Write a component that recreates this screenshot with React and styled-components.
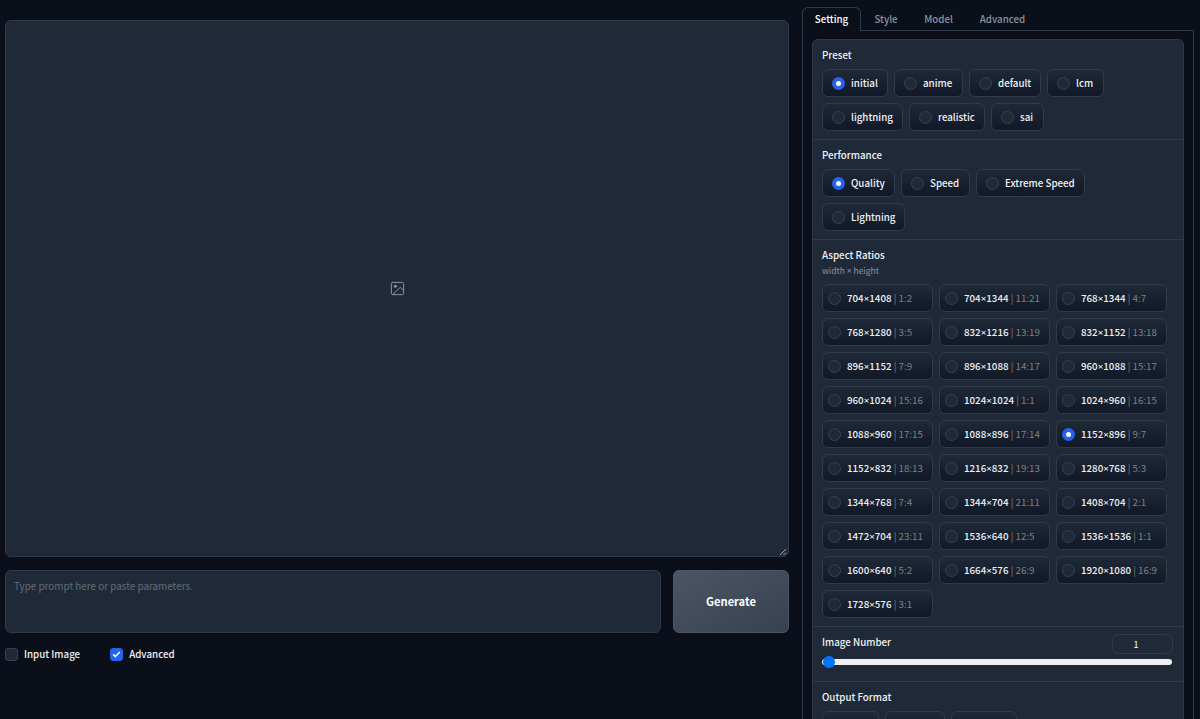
import styled, { createGlobalStyle, css } from "styled-components";

const colors = {
  body: "#0b0f19",
  block: "#1f2937",
  border: "#303b4a",
  text: "#f0f2f5",
  muted: "#8a93a1",
  accent: "#2563eb",
};

const PRESETS = [
  { label: "initial", width: 66, checked: true },
  { label: "anime", width: 69 },
  { label: "default", width: 72 },
  { label: "lcm", width: 57 },
  { label: "lightning", width: 81 },
  { label: "realistic", width: 76 },
  { label: "sai", width: 53 },
];

const PERFORMANCE = [
  { label: "Quality", width: 73, checked: true },
  { label: "Speed", width: 69 },
  { label: "Extreme Speed", width: 109 },
  { label: "Lightning", width: 83 },
];

const OUTPUT_FORMATS = [
  { label: "png", width: 57 },
  { label: "jpeg", width: 60 },
  { label: "webp", width: 66 },
];

const RATIOS = [
  ["704×1408", "1:2"],
  ["704×1344", "11:21"],
  ["768×1344", "4:7"],
  ["768×1280", "3:5"],
  ["832×1216", "13:19"],
  ["832×1152", "13:18"],
  ["896×1152", "7:9"],
  ["896×1088", "14:17"],
  ["960×1088", "15:17"],
  ["960×1024", "15:16"],
  ["1024×1024", "1:1"],
  ["1024×960", "16:15"],
  ["1088×960", "17:15"],
  ["1088×896", "17:14"],
  ["1152×896", "9:7"],
  ["1152×832", "18:13"],
  ["1216×832", "19:13"],
  ["1280×768", "5:3"],
  ["1344×768", "7:4"],
  ["1344×704", "21:11"],
  ["1408×704", "2:1"],
  ["1472×704", "23:11"],
  ["1536×640", "12:5"],
  ["1536×1536", "1:1"],
  ["1600×640", "5:2"],
  ["1664×576", "26:9"],
  ["1920×1080", "16:9"],
  ["1728×576", "3:1"],
];

const GlobalStyle = createGlobalStyle`
  * {
    box-sizing: border-box;
  }

  body {
    margin: 0;
    overflow: hidden;
    background: ${colors.body};
    color: ${colors.text};
    font-family: "Noto Sans CJK SC", "Noto Sans", sans-serif;
    font-size: 9.75px;
    line-height: 14px;
  }
`;

const Page = styled.div`
  display: flex;
  gap: 13px;
  height: 719px;
  padding: 0 6px 0 5px;
  overflow: hidden;
`;

const MainColumn = styled.main`
  display: flex;
  flex-direction: column;
  width: 784px;
  padding-top: 20px;
`;

const Preview = styled.div`
  position: relative;
  display: flex;
  align-items: center;
  justify-content: center;
  height: 537px;
  border: 1px solid ${colors.border};
  border-radius: 6px;
  background: ${colors.block};
`;

const ResizeHandle = styled.svg`
  position: absolute;
  right: 0;
  bottom: 0;
`;

const PromptRow = styled.div`
  display: flex;
  gap: 12px;
  height: 63px;
  margin-top: 13px;
`;

const Prompt = styled.textarea`
  flex: 1;
  padding: 7px 8px;
  border: 1px solid ${colors.border};
  border-radius: 6px;
  background: ${colors.block};
  color: ${colors.text};
  font: inherit;
  font-size: 9.9px;
  line-height: 16px;
  resize: none;

  &::placeholder {
    color: #626c7c;
  }
`;

const GenerateButton = styled.button`
  width: 116px;
  padding: 0 0 2px;
  border: 1px solid #4b5563;
  border-radius: 6px;
  background: linear-gradient(to bottom right, #4b5563, #374151);
  color: #fff;
  font: bold 11.15px "Noto Sans CJK SC", sans-serif;
`;

const CheckRow = styled.div`
  display: flex;
  gap: 30px;
  margin-top: 14px;
`;

const CheckLabel = styled.label`
  display: flex;
  align-items: center;
  gap: 6px;
  height: 14px;
  font-weight: 500;
`;

const CheckBox = styled.span`
  display: flex;
  align-items: center;
  justify-content: center;
  width: 13px;
  height: 13px;
  border: 1px solid ${(p) => (p.$checked ? colors.accent : "#374151")};
  border-radius: 3px;
  background: ${(p) => (p.$checked ? colors.accent : colors.block)};

  svg {
    flex: none;
  }
`;

const SideColumn = styled.aside`
  display: flex;
  flex-direction: column;
  width: 392px;
  padding-top: 7px;
`;

const TabBar = styled.nav`
  display: flex;
  flex: none;
  height: 24px;
`;

const Tab = styled.button`
  width: ${(p) => p.$width}px;
  padding: 1px 0 0;
  border: 0;
  border-bottom: 1px solid ${colors.border};
  background: none;
  color: ${colors.muted};
  font: inherit;
  font-weight: 500;

  ${(p) =>
    p.$active &&
    css`
      padding: 0 0 1px;
      border: 1px solid ${colors.border};
      border-bottom: 0;
      border-radius: 6px 6px 0 0;
      color: #fff;
    `}
`;

const TabFiller = styled.div`
  flex: 1;
  border-bottom: 1px solid ${colors.border};
`;

const TabPanel = styled.div`
  flex: 1;
  padding: 8px 9px;
  border: solid ${colors.border};
  border-width: 0 1px;
`;

const Form = styled.div`
  width: 372px;
  height: 720px;
  border: 1px solid ${colors.border};
  border-radius: 6px;
  background: ${colors.block};
`;

const Section = styled.section`
  height: ${(p) => p.$height}px;
  padding: 8px 9px 0;
  border-bottom: 1px solid ${colors.border};
`;

const SectionTitle = styled.div`
  height: 14px;
  font-weight: 500;
`;

const SectionInfo = styled.div`
  height: 12px;
  margin-top: 2px;
  color: ${colors.muted};
  font-size: 8.5px;
  line-height: 12px;
`;

const Options = styled.div`
  display: flex;
  flex-wrap: wrap;
  gap: 6px;
  width: 351px;
  margin-top: 7px;

  ${SectionInfo} + & {
    margin-top: 8px;
  }
`;

const Option = styled.label`
  display: flex;
  align-items: center;
  gap: 6px;
  width: ${(p) => p.$width}px;
  height: 28px;
  padding-left: ${(p) => (p.$compact ? 5 : 9)}px;
  border: 1px solid ${colors.border};
  border-radius: 6px;
  background: linear-gradient(to top, #111827, #1f2937);
  font-weight: 500;
  white-space: nowrap;
`;

const Radio = styled.span`
  flex: none;
  width: 13px;
  height: 13px;
  border: 1px solid #374151;
  border-radius: 50%;
  background: ${colors.block};

  ${(p) =>
    p.$checked &&
    css`
      border: 4px solid ${colors.accent};
      background: #fff;
    `}
`;

// The CJK face draws a full-width multiplication sign
const Times = styled.span`
  font-family: "Noto Sans", sans-serif;
  line-height: 1;
`;

const Ratio = styled.span`
  color: grey;
  font-weight: 400;
`;

const SliderHead = styled.div`
  display: flex;
  justify-content: space-between;
  height: 20px;
`;

const NumberBox = styled.div`
  width: 61px;
  height: 20px;
  margin: -1px 1px 0 0;
  padding-right: 13px;
  border: 1px solid ${colors.border};
  border-radius: 6px;
  line-height: 18px;
  text-align: center;
`;

const Slider = styled.div`
  display: flex;
  align-items: center;
  width: 350px;
  height: 6px;
  margin-top: 4px;
  border-radius: 3px;
  background: #efefef;
`;

const Thumb = styled.span`
  width: 12px;
  height: 12px;
  margin-left: 0.5px;
  border-radius: 50%;
  background: #0075ff;
`;

const ImageIcon = () => (
  <svg
    width="15"
    height="15"
    viewBox="0 0 24 24"
    fill="none"
    stroke="#8d95a1"
    strokeWidth="1.6"
    strokeLinecap="round"
    strokeLinejoin="round"
  >
    <rect x="2.2" y="2.2" width="19.6" height="19.6" rx="2" />
    <circle cx="8.5" cy="8.5" r="1.8" fill="#8d95a1" />
    <path d="M21.5 15l-5-5L4.5 21.5" />
  </svg>
);

const OptionGroup = ({ options }) => (
  <Options>
    {options.map(({ label, width, checked }) => (
      <Option key={label} $width={width}>
        <Radio $checked={checked} />
        {label}
      </Option>
    ))}
  </Options>
);

const RatioOption = ({ size, ratio }) => {
  const [width, height] = size.split("×");

  return (
    <Option $compact $width={111}>
      <Radio $checked={size === "1152×896"} />
      <span>
        {width}
        <Times>×</Times>
        {height} <Ratio>| {ratio}</Ratio>
      </span>
    </Option>
  );
};

const App = () => (
  <>
    <GlobalStyle />
    <Page>
      <MainColumn>
        <Preview>
          <ImageIcon />
          <ResizeHandle width="9" height="9" viewBox="0 0 9 9">
            <path d="M1 8L7 2M4.5 8L7 5.5" stroke="#a3a8b0" strokeWidth="1" />
          </ResizeHandle>
        </Preview>
        <PromptRow>
          <Prompt placeholder="Type prompt here or paste parameters." />
          <GenerateButton>Generate</GenerateButton>
        </PromptRow>
        <CheckRow>
          <CheckLabel>
            <CheckBox />
            Input Image
          </CheckLabel>
          <CheckLabel>
            <CheckBox $checked>
              <svg width="13" height="13" viewBox="0 0 16 16" fill="#fff">
                <path d="M12.207 4.793a1 1 0 010 1.414l-5 5a1 1 0 01-1.414 0l-2-2a1 1 0 011.414-1.414L6.5 9.086l4.293-4.293a1 1 0 011.414 0z" />
              </svg>
            </CheckBox>
            Advanced
          </CheckLabel>
        </CheckRow>
      </MainColumn>

      <SideColumn>
        <TabBar>
          <Tab $active $width={59}>
            Setting
          </Tab>
          <Tab $width={50}>Style</Tab>
          <Tab $width={55}>Model</Tab>
          <Tab $width={73}>Advanced</Tab>
          <TabFiller />
        </TabBar>
        <TabPanel>
          <Form>
            <Section $height={100}>
              <SectionTitle>Preset</SectionTitle>
              <OptionGroup options={PRESETS} />
            </Section>
            <Section $height={100}>
              <SectionTitle>Performance</SectionTitle>
              <OptionGroup options={PERFORMANCE} />
            </Section>
            <Section $height={387}>
              <SectionTitle>Aspect Ratios</SectionTitle>
              <SectionInfo>
                width <Times>×</Times> height
              </SectionInfo>
              <Options>
                {RATIOS.map(([size, ratio]) => (
                  <RatioOption key={size} size={size} ratio={ratio} />
                ))}
              </Options>
            </Section>
            <Section $height={55}>
              <SliderHead>
                <SectionTitle>Image Number</SectionTitle>
                <NumberBox>1</NumberBox>
              </SliderHead>
              <Slider>
                <Thumb />
              </Slider>
            </Section>
            <Section $height={90}>
              <SectionTitle>Output Format</SectionTitle>
              <OptionGroup options={OUTPUT_FORMATS} />
            </Section>
          </Form>
        </TabPanel>
      </SideColumn>
    </Page>
  </>
);

export default App;
